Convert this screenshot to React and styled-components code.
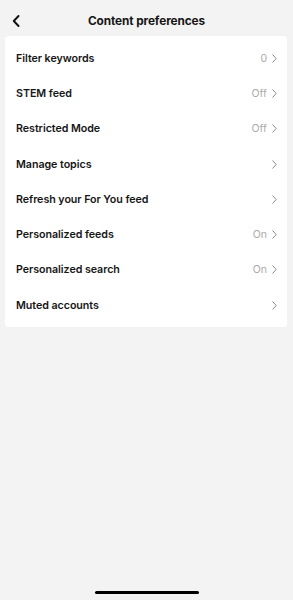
import React from 'react'
import styled, { createGlobalStyle } from 'styled-components'

const Global = createGlobalStyle`
  html, body {
    margin: 0;
    padding: 0;
    background: #f3f3f3;
  }
  body {
    font-family: Inter, "Noto Sans", sans-serif;
    -webkit-font-smoothing: antialiased;
  }
`

const Screen = styled.div`
  width: 293px;
  height: 600px;
  background: #f3f3f3;
  display: flex;
  flex-direction: column;
  position: relative;
  overflow: hidden;
`

const Header = styled.div`
  height: 36px;
  display: flex;
  align-items: center;
  justify-content: center;
  position: relative;
  padding-top: 5px;
  box-sizing: border-box;
`

const Back = styled.button`
  position: absolute;
  left: 9px;
  top: 13px;
  width: 14px;
  height: 16px;
  padding: 0;
  border: 0;
  background: none;
  display: flex;
  align-items: center;
  justify-content: center;
`

const Title = styled.h1`
  margin: 0;
  font-size: 11.8px;
  font-weight: 700;
  color: #161616;
  letter-spacing: -0.1px;
`

const Card = styled.div`
  margin: 0 6px 0 5px;
  background: #fff;
  border-radius: 4px;
  padding: 4.5px 0;
  display: flex;
  flex-direction: column;
`

const Row = styled.div`
  height: 35.3px;
  display: flex;
  align-items: center;
  padding: 0 10px 0 11px;
`

const Label = styled.span`
  flex: 1;
  font-size: 10.7px;
  font-weight: 600;
  color: #161616;
  letter-spacing: -0.05px;
`

const Value = styled.span`
  font-size: 10.5px;
  color: #aaaaaa;
  margin-right: 5px;
`

const HomeBar = styled.div`
  position: absolute;
  left: 95px;
  bottom: 6px;
  width: 104px;
  height: 3.5px;
  border-radius: 2px;
  background: #000;
`

const Chevron = () => (
  <svg width="5" height="9" viewBox="0 0 5 9">
    <path d="M0.8 0.8 L4.2 4.5 L0.8 8.2" fill="none" stroke="#8a8a8a" strokeWidth="1" strokeLinecap="round" strokeLinejoin="round" />
  </svg>
)

const rows = [
  { label: 'Filter keywords', value: '0' },
  { label: 'STEM feed', value: 'Off' },
  { label: 'Restricted Mode', value: 'Off' },
  { label: 'Manage topics' },
  { label: 'Refresh your For You feed' },
  { label: 'Personalized feeds', value: 'On' },
  { label: 'Personalized search', value: 'On' },
  { label: 'Muted accounts' },
]

export default function App() {
  return (
    <Screen>
      <Global />
      <Header>
        <Back aria-label="Back">
          <svg width="8" height="12" viewBox="0 0 8 12">
            <path d="M6.5 1 L1.8 6 L6.5 11" fill="none" stroke="#111" strokeWidth="1.9" strokeLinecap="round" strokeLinejoin="round" />
          </svg>
        </Back>
        <Title>Content preferences</Title>
      </Header>
      <Card>
        {rows.map((r) => (
          <Row key={r.label}>
            <Label>{r.label}</Label>
            {r.value && <Value>{r.value}</Value>}
            <Chevron />
          </Row>
        ))}
      </Card>
      <HomeBar />
    </Screen>
  )
}
